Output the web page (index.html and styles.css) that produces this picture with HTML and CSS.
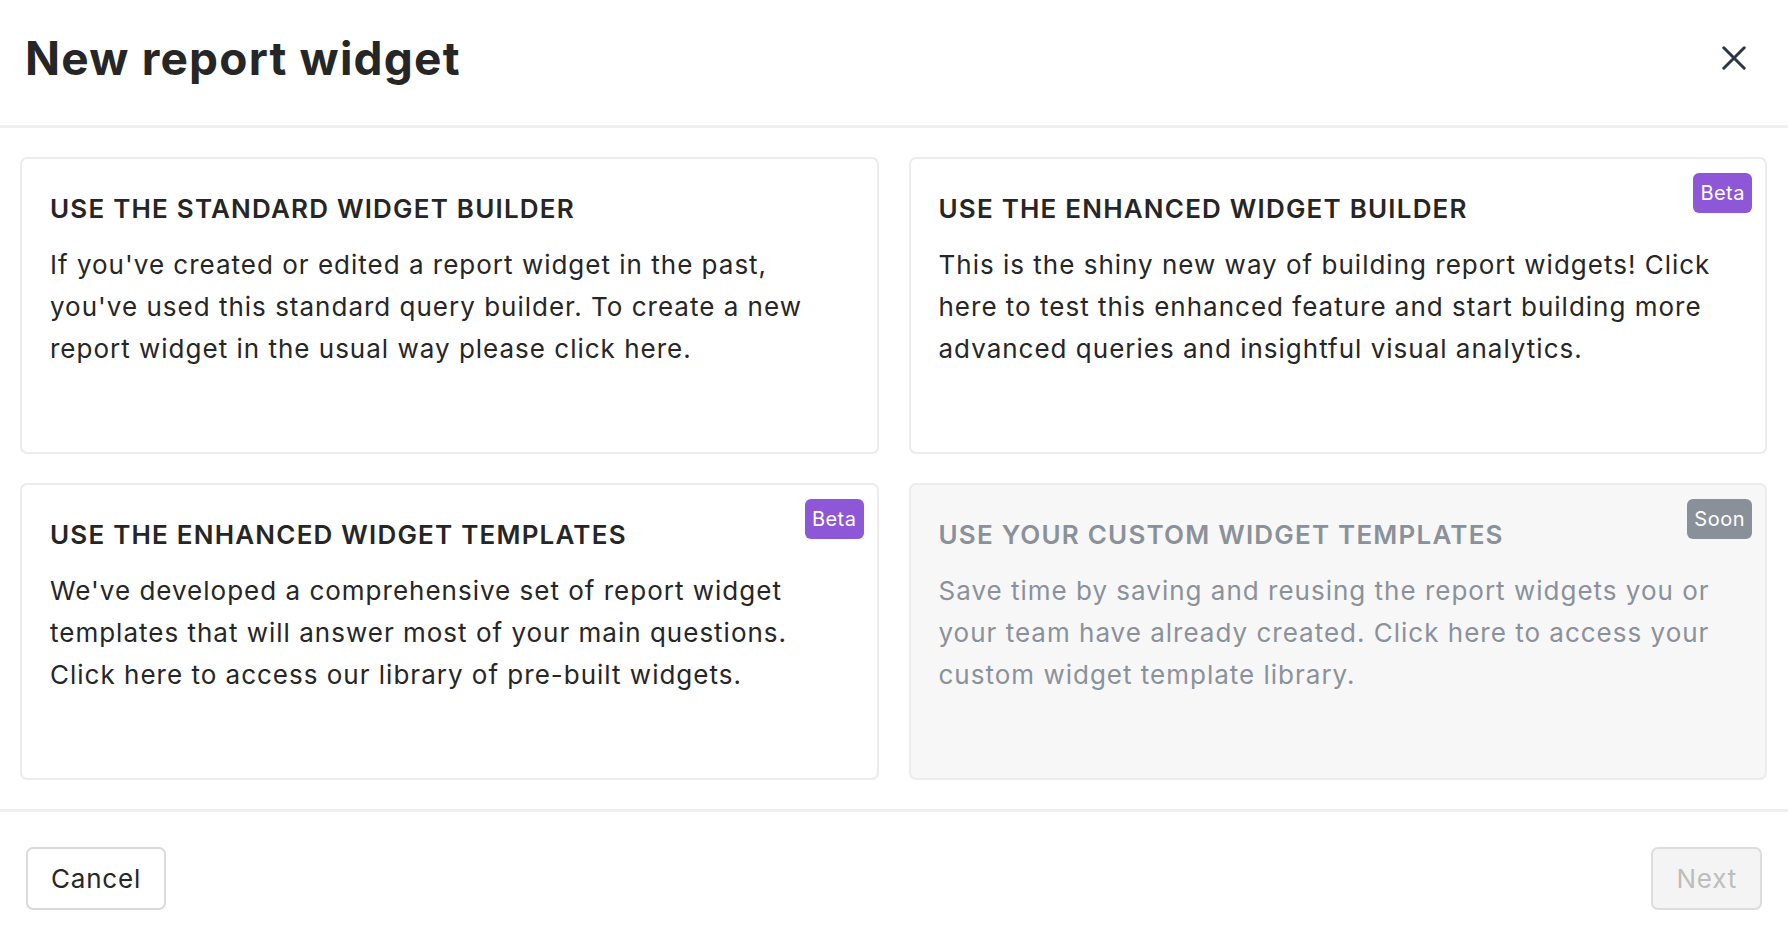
FILE: index.html
```
<!DOCTYPE html>
<html lang="en">
<head>
<meta charset="utf-8">
<title>New report widget</title>
<link rel="stylesheet" href="styles.css">
</head>
<body>
<div class="modal">
  <header class="modal-header">
    <h1 class="modal-title">New report widget</h1>
    <button class="close-btn" aria-label="Close">
      <svg width="24" height="24" viewBox="0 0 24 24" fill="none" stroke="#2b3747" stroke-width="3" stroke-linecap="round"><path d="M1.8 1.8 L22.2 22.2 M22.2 1.8 L1.8 22.2"/></svg>
    </button>
  </header>
  <main class="options">
    <div class="card">
      <h2 class="card-title">USE THE STANDARD WIDGET BUILDER</h2>
      <p class="card-text">If you've created or edited a report widget in the past, you've used this standard query builder. To create a new report widget in the usual way please click here.</p>
    </div>
    <div class="card">
      <span class="badge badge-beta">Beta</span>
      <h2 class="card-title">USE THE ENHANCED WIDGET BUILDER</h2>
      <p class="card-text">This is the shiny new way of building report widgets! Click here to test this enhanced feature and start building more advanced queries and insightful visual analytics.</p>
    </div>
    <div class="card">
      <span class="badge badge-beta">Beta</span>
      <h2 class="card-title">USE THE ENHANCED WIDGET TEMPLATES</h2>
      <p class="card-text">We've developed a comprehensive set of report widget templates that will answer most of your main questions. Click here to access our library of pre-built widgets.</p>
    </div>
    <div class="card card-disabled">
      <span class="badge badge-soon">Soon</span>
      <h2 class="card-title">USE YOUR CUSTOM WIDGET TEMPLATES</h2>
      <p class="card-text">Save time by saving and reusing the report widgets you or your team have already created. Click here to access your custom widget template library.</p>
    </div>
  </main>
  <footer class="modal-footer">
    <button class="btn">Cancel</button>
    <button class="btn btn-disabled">Next</button>
  </footer>
</div>
</body>
</html>
```
FILE: styles.css
```
* { box-sizing: border-box; }
html, body { margin: 0; padding: 0; background: #ffffff; }
body {
  font-family: Inter, "Noto Sans", "Liberation Sans", sans-serif;
  color: #262626;
}
.modal { width: 1788px; }
.modal-header {
  height: 128px;
  display: flex;
  align-items: center;
  justify-content: space-between;
  padding: 0 42px 9px 25px;
  border-bottom: 3px solid #efefef;
}
.modal-title {
  margin: 0;
  font-size: 46px;
  font-weight: 700;
  line-height: 56px;
  color: #262626;
  letter-spacing: 1.2px;
}
.close-btn {
  background: none;
  border: none;
  padding: 0;
  width: 24px;
  height: 24px;
  display: flex;
  cursor: pointer;
}
.options {
  display: grid;
  grid-template-columns: 1fr 1fr;
  column-gap: 30px;
  row-gap: 29px;
  padding: 29px 21px 29px 20px;
}
.card {
  position: relative;
  min-height: 297px;
  border: 2px solid #ececec;
  border-radius: 7px;
  background: #ffffff;
  padding: 34px 38px 20px 28px;
}
.card-title {
  margin: 0 0 19px 0;
  font-size: 26px;
  font-weight: 600;
  line-height: 32px;
  color: #262626;
  letter-spacing: 1.2px;
}
.card-text {
  margin: 0;
  font-size: 26px;
  font-weight: 400;
  line-height: 42px;
  color: #262626;
  letter-spacing: 1px;
}
.card-disabled { background: #f7f7f7; }
.card-disabled .card-title,
.card-disabled .card-text { color: #8b919a; }
.badge {
  position: absolute;
  top: 14px;
  right: 13px;
  height: 40px;
  line-height: 40px;
  padding: 0 7px;
  border-radius: 6px;
  color: #ffffff;
  font-size: 20px;
  font-weight: 400;
  letter-spacing: 0.5px;
}
.badge-beta { background: #8d57d8; }
.badge-soon { background: #8a9099; }
.modal-footer {
  display: flex;
  justify-content: space-between;
  align-items: flex-start;
  border-top: 3px solid #efefef;
  padding: 35px 26px 0 26px;
}
.btn {
  height: 63px;
  padding: 0 23px;
  border: 2px solid #dadada;
  border-radius: 7px;
  background: #ffffff;
  color: #262626;
  font-family: Inter, "Noto Sans", "Liberation Sans", sans-serif;
  font-size: 26px;
  font-weight: 400;
  letter-spacing: 0.8px;
}
.btn-disabled {
  background: #f4f4f4;
  color: #bdbdbd;
  border-color: #dddddd;
}
```
